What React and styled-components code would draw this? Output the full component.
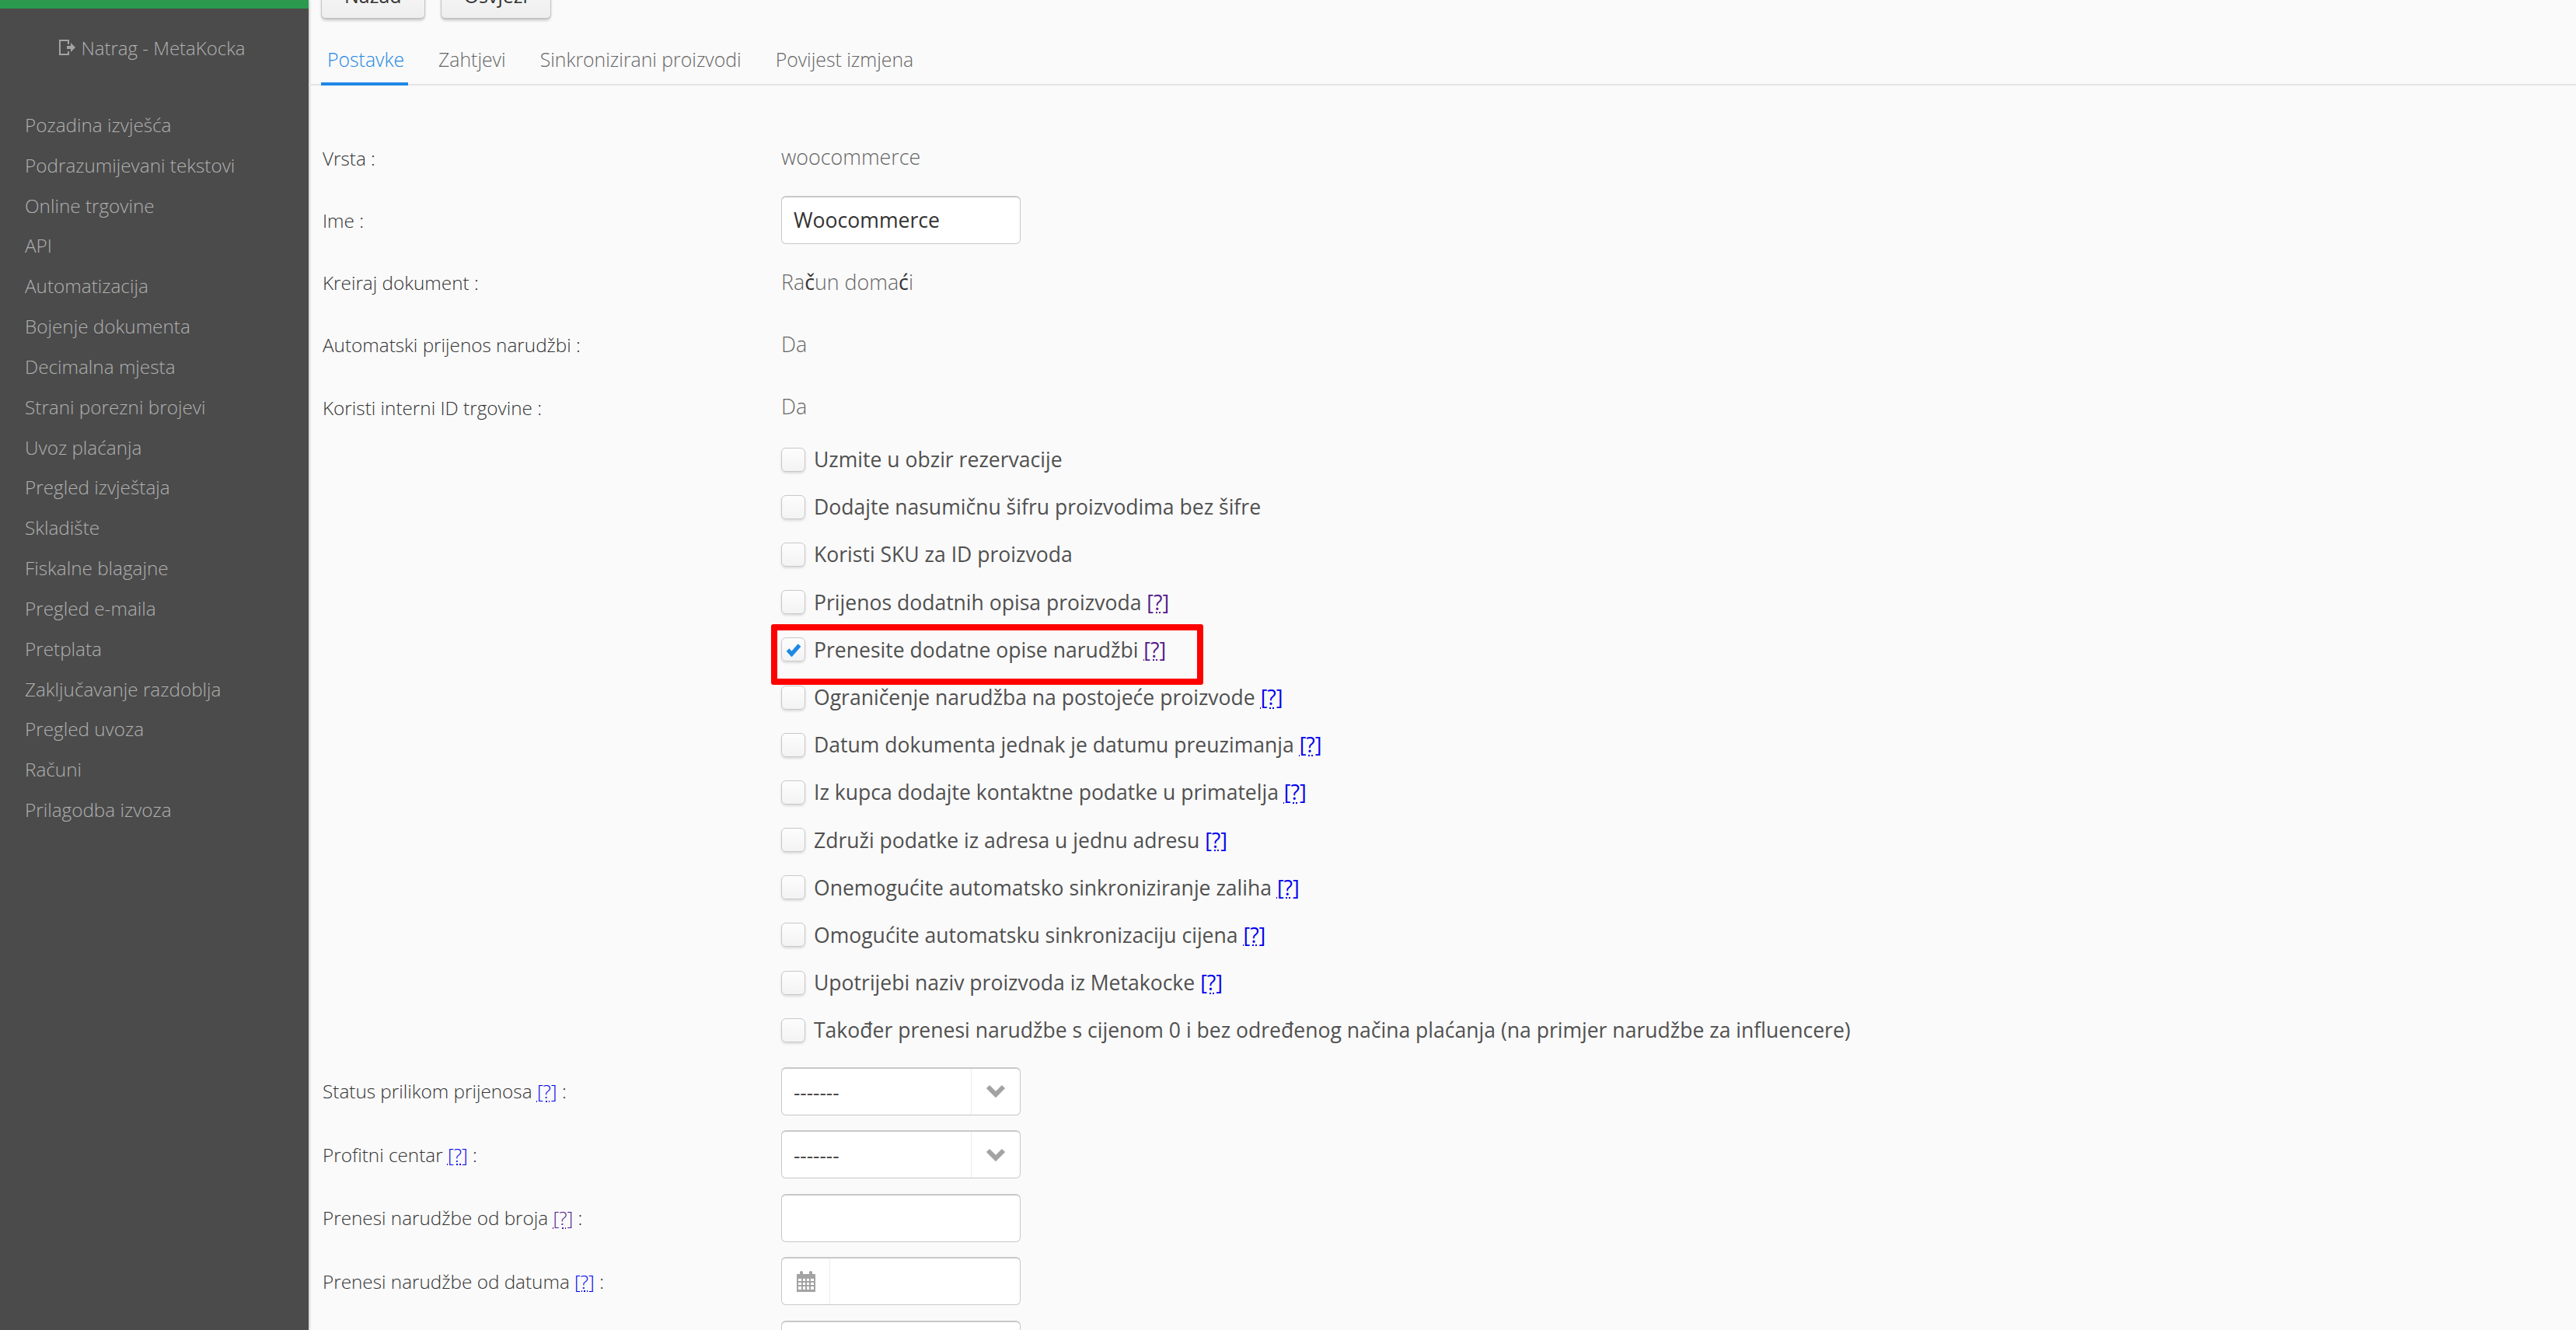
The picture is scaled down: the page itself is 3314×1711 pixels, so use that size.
import styled, { createGlobalStyle } from 'styled-components';

const menuItems = [
    'Pozadina izvješća',
    'Podrazumijevani tekstovi',
    'Online trgovine',
    'API',
    'Automatizacija',
    'Bojenje dokumenta',
    'Decimalna mjesta',
    'Strani porezni brojevi',
    'Uvoz plaćanja',
    'Pregled izvještaja',
    'Skladište',
    'Fiskalne blagajne',
    'Pregled e-maila',
    'Pretplata',
    'Zaključavanje razdoblja',
    'Pregled uvoza',
    'Računi',
    'Prilagodba izvoza',
];

const tabs = ['Postavke', 'Zahtjevi', 'Sinkronizirani proizvodi', 'Povijest izmjena'];

const checks = [
    { text: 'Uzmite u obzir rezervacije' },
    { text: 'Dodajte nasumičnu šifru proizvodima bez šifre' },
    { text: 'Koristi SKU za ID proizvoda' },
    { text: 'Prijenos dodatnih opisa proizvoda', help: 'visited' },
    { text: 'Prenesite dodatne opise narudžbi', help: 'visited', checked: true },
    { text: 'Ograničenje narudžba na postojeće proizvode', help: 'link' },
    { text: 'Datum dokumenta jednak je datumu preuzimanja', help: 'link' },
    { text: 'Iz kupca dodajte kontaktne podatke u primatelja', help: 'link' },
    { text: 'Združi podatke iz adresa u jednu adresu', help: 'link' },
    { text: 'Onemogućite automatsko sinkroniziranje zaliha', help: 'link' },
    { text: 'Omogućite automatsku sinkronizaciju cijena', help: 'link' },
    { text: 'Upotrijebi naziv proizvoda iz Metakocke', help: 'link' },
    { text: 'Također prenesi narudžbe s cijenom 0 i bez određenog načina plaćanja (na primjer narudžbe za influencere)' },
];

function Help({ kind }) {
    return <HelpLink $visited={kind === 'visited'}>[?]</HelpLink>;
}

function ExitIcon() {
    return (
        <svg width="24" height="24" viewBox="0 0 24 24">
            <path d="M2 2h13v6h-2V4H4v16h9v-3h2v5H2z" fill="#a3a3a3" />
            <path d="M12 10h5V6l6 6-6 6v-4h-5z" fill="#a3a3a3" />
        </svg>
    );
}

function Chevron() {
    return (
        <svg width="26" height="20" viewBox="0 0 26 20">
            <path d="M3 4l10 10L23 4" fill="none" stroke="#a3a3a3" strokeWidth="6" />
        </svg>
    );
}

function CalendarIcon() {
    return (
        <svg width="26" height="27" viewBox="0 0 26 27">
            <path
                d="M1 4h24v23H1z M3 10v3h4v-3z M9 10v3h3v-3z M14 10v3h3v-3z M19 10v3h4v-3z M3 15v3h4v-3z M9 15v3h3v-3z M14 15v3h3v-3z M19 15v3h4v-3z M3 20v4h4v-4z M9 20v4h3v-4z M14 20v4h3v-4z M19 20v4h4v-4z"
                fill="#a3a3a3"
                fillRule="evenodd"
            />
            <rect x="5" y="0" width="4" height="7" rx="2" fill="#a3a3a3" />
            <rect x="17" y="0" width="4" height="7" rx="2" fill="#a3a3a3" />
        </svg>
    );
}

function CheckMark() {
    return (
        <svg width="20" height="18" viewBox="0 0 20 18">
            <path d="M2.5 9l5 5.5L17.5 3" fill="none" stroke="#1e88e5" strokeWidth="5" />
        </svg>
    );
}

export default function App() {
    return (
        <Page>
            <GlobalStyle />
            <Sidebar>
                <GreenBar />
                <BackLink>
                    <ExitIcon />
                    Natrag - MetaKocka
                </BackLink>
                <Menu>
                    {menuItems.map((item) => (
                        <MenuItem key={item}>{item}</MenuItem>
                    ))}
                </Menu>
            </Sidebar>
            <Main>
                <ButtonRow>
                    <Button>Nazad</Button>
                    <Button>Osvježi</Button>
                </ButtonRow>
                <TabBar>
                    {tabs.map((tab, i) => (
                        <Tab key={tab} $active={i === 0}>{tab}</Tab>
                    ))}
                </TabBar>
                <Form>
                    <InfoRow>
                        <Label>Vrsta :</Label>
                        <Value>woocommerce</Value>
                    </InfoRow>
                    <InfoRow>
                        <Label>Ime :</Label>
                        <TextField>Woocommerce</TextField>
                    </InfoRow>
                    <InfoRow>
                        <Label>Kreiraj dokument :</Label>
                        <Value>Ra<Fallback>č</Fallback>un doma<Fallback>ć</Fallback>i</Value>
                    </InfoRow>
                    <InfoRow>
                        <Label>Automatski prijenos narudžbi :</Label>
                        <Value>Da</Value>
                    </InfoRow>
                    <InfoRow>
                        <Label>Koristi interni ID trgovine :</Label>
                        <Value>Da</Value>
                    </InfoRow>
                    <CheckList>
                        {checks.map((c) => (
                            <CheckRow key={c.text}>
                                <CheckBox>{c.checked && <CheckMark />}</CheckBox>
                                <CheckLabel>
                                    {c.text}
                                    {c.help && <> <Help kind={c.help} /></>}
                                </CheckLabel>
                            </CheckRow>
                        ))}
                        <Highlight />
                    </CheckList>
                    <FieldRows>
                        <Row>
                            <Label>Status prilikom prijenosa <Help kind="link" /> :</Label>
                            <SelectField>
                                <SelectText>-------</SelectText>
                                <SelectArrow><Chevron /></SelectArrow>
                            </SelectField>
                        </Row>
                        <Row>
                            <Label>Profitni centar <Help kind="link" /> :</Label>
                            <SelectField>
                                <SelectText>-------</SelectText>
                                <SelectArrow><Chevron /></SelectArrow>
                            </SelectField>
                        </Row>
                        <Row>
                            <Label>Prenesi narudžbe od broja <Help kind="visited" /> :</Label>
                            <TextField />
                        </Row>
                        <Row>
                            <Label>Prenesi narudžbe od datuma <Help kind="link" /> :</Label>
                            <DateField>
                                <DateIcon><CalendarIcon /></DateIcon>
                            </DateField>
                        </Row>
                        <Row>
                            <Label />
                            <TextField />
                        </Row>
                    </FieldRows>
                </Form>
            </Main>
        </Page>
    );
}

const GlobalStyle = createGlobalStyle`
    html, body {
        margin: 0;
        height: 100%;
        overflow: hidden;
        background: #fafafa;
    }
    * {
        box-sizing: border-box;
    }
`;

const Page = styled.div`
    display: flex;
    height: 1711px;
    overflow: hidden;
    font-family: "Open Sans", "Noto Sans", sans-serif;
    color: #444;
`;

const Sidebar = styled.aside`
    flex: 0 0 397px;
    background: #4b4b4b;
    box-shadow: 1px 0 3px rgba(0, 0, 0, 0.25);
    color: #a6a6a6;
    font-weight: 400;
`;

const GreenBar = styled.div`
    height: 11px;
    background: #2b9a4f;
`;

const BackLink = styled.div`
    display: flex;
    align-items: center;
    justify-content: center;
    gap: 6px;
    height: 100px;
    padding-right: 7px;
    font-size: 24px;
    font-weight: 300;
    color: #b0b0b0;
`;

const Menu = styled.nav`
    display: flex;
    flex-direction: column;
    margin-top: 24px;
    padding-left: 32px;
`;

const MenuItem = styled.div`
    height: 51.84px;
    line-height: 51.84px;
    font-size: 24.3px;
    font-weight: 300;
    color: #b0b0b0;
`;

const Main = styled.main`
    flex: 1;
    min-width: 0;
`;

const ButtonRow = styled.div`
    display: flex;
    gap: 20px;
    height: 25px;
    padding-left: 16px;
    align-items: flex-end;
`;

const Button = styled.button`
    flex: none;
    height: 62px;
    padding: 0 29px;
    border: 1px solid #c4c4c4;
    border-bottom-width: 2px;
    border-radius: 6px;
    background: linear-gradient(#fbfbfb, #eeeeee);
    box-shadow: 0 2px 3px rgba(0, 0, 0, 0.15);
    font: 400 25px "Open Sans", sans-serif;
    color: #333;
`;

const TabBar = styled.div`
    display: flex;
    height: 85px;
    padding-left: 16px;
    border-bottom: 2px solid #e4e4e4;
    align-items: flex-end;
`;

const Tab = styled.div`
    height: 85px;
    padding: 34px 5px 0 8px;
    margin-right: 31px;
    font-size: 24.8px;
    font-weight: 300;
    color: ${(p) => (p.$active ? '#1e88e5' : '#666')};
    border-bottom: 4px solid ${(p) => (p.$active ? '#1e88e5' : 'transparent')};
    margin-bottom: -2px;
`;

const Form = styled.div`
    padding: 62px 0 0 18px;
`;

const Row = styled.div`
    display: grid;
    grid-template-columns: 590px 308px;
    align-items: center;
    height: 62px;
    margin-bottom: 19.5px;
`;

const InfoRow = styled(Row)`
    margin-bottom: 18.3px;
`;

const Label = styled.div`
    font-size: 24.3px;
    font-weight: 300;
    color: #333;
`;

const Value = styled.div`
    margin-top: -3px;
    font-size: 26.8px;
    font-weight: 300;
    color: #666;
`;

const Fallback = styled.span`
    font-weight: 400;
    color: #333;
`;

const TextField = styled.div`
    height: 62px;
    padding: 0 15px;
    line-height: 58px;
    border: 1px solid #c8c8c8;
    border-top-width: 2px;
    border-radius: 6px;
    background: #fff;
    font-size: 26.6px;
    color: #333;
`;

const SelectField = styled.div`
    display: flex;
    height: 62px;
    border: 1px solid #c8c8c8;
    border-top-width: 2px;
    border-radius: 6px;
    background: #fff;
`;

const SelectText = styled.div`
    flex: 1;
    padding: 0 15px;
    line-height: 60px;
    font-size: 26px;
    color: #444;
`;

const SelectArrow = styled.div`
    display: flex;
    flex: 0 0 63px;
    align-items: center;
    justify-content: center;
    border-left: 1px solid #ececec;
`;

const DateField = styled.div`
    display: flex;
    height: 62px;
    border: 1px solid #c8c8c8;
    border-top-width: 2px;
    border-radius: 6px;
    background: #fff;
`;

const DateIcon = styled.div`
    display: flex;
    flex: 0 0 62px;
    align-items: center;
    justify-content: center;
    border-right: 1px solid #ececec;
`;

const CheckList = styled.div`
    position: relative;
    display: flex;
    flex-direction: column;
    margin: -13px 0 0 590px;
`;

const CheckRow = styled.div`
    display: flex;
    align-items: center;
    height: 61.2px;
`;

const CheckBox = styled.div`
    display: flex;
    flex: 0 0 31px;
    height: 31px;
    align-items: center;
    justify-content: center;
    border: 1px solid #c8c8c8;
    border-radius: 6px;
    background: linear-gradient(#fdfdfd, #f3f3f3);
    box-shadow: 0 2px 3px rgba(0, 0, 0, 0.12);
`;

const CheckLabel = styled.div`
    margin-left: 11px;
    font-size: 26.55px;
    font-weight: 400;
    color: #505050;
    white-space: nowrap;
`;

const Highlight = styled.div`
    position: absolute;
    left: -13px;
    top: 243px;
    width: 556px;
    height: 78px;
    border: 8px solid #ff0000;
    border-radius: 3px;
    pointer-events: none;
`;

const FieldRows = styled.div`
    margin-top: 17px;
`;

const HelpLink = styled.span`
    color: ${(p) => (p.$visited ? '#551a8b' : '#0000ee')};
    text-decoration: underline dotted 2px;
    text-underline-offset: 3px;
`;
